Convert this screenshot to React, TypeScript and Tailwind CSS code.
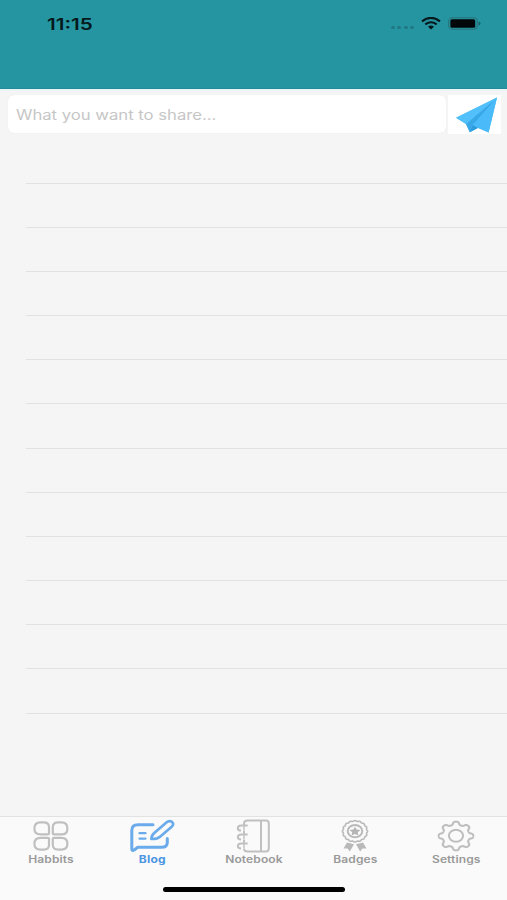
import type { ReactNode } from "react";

const rows = Array.from({ length: 13 }, (_, i) => i);

// Closed wavy outline around a centre, used by the gear and the rosette
const wavyPath = (
  cx: number,
  cy: number,
  rx: number,
  ry: number,
  teeth: number,
  depth: number,
  sharpness: number
) => {
  const points: string[] = [];
  for (let i = 0; i < 240; i++) {
    const a = (i / 240) * Math.PI * 2;
    const wave = Math.tanh(sharpness * Math.cos(teeth * a)) / Math.tanh(sharpness);
    const k = 1 + depth * wave;
    points.push(`${(cx + rx * k * Math.cos(a)).toFixed(2)} ${(cy + ry * k * Math.sin(a)).toFixed(2)}`);
  }
  return `M${points.join("L")}Z`;
};

const HabitsIcon = () => (
  <svg width="36" height="30" viewBox="0 0 36 30" fill="none" stroke="#c0c0c0" strokeWidth="2.2">
    <path d="M7.5 1.4h3.2Q16 1.4 16 6v6Q16 13.4 14.5 13.4H7.5Q1.4 13.4 1.4 7.4T7.5 1.4Z" />
    <path d="M28.5 1.4h-3.2Q19.8 1.4 19.8 6v6Q19.8 13.4 21.3 13.4h7.2Q34.4 13.4 34.4 7.4T28.5 1.4Z" />
    <path d="M7.5 28.6h3.2Q16 28.6 16 24v-6Q16 16.8 14.5 16.8H7.5Q1.4 16.8 1.4 22.7T7.5 28.6Z" />
    <path d="M28.5 28.6h-3.2Q19.8 28.6 19.8 24v-6Q19.8 16.8 21.3 16.8h7.2Q34.4 16.8 34.4 22.7T28.5 28.6Z" />
  </svg>
);

const BlogIcon = () => (
  <svg
    width="46"
    height="34"
    viewBox="0 0 46 34"
    fill="none"
    stroke="#6aabeb"
    strokeWidth="3"
    strokeLinecap="round"
    strokeLinejoin="round"
  >
    <path d="M24 5.8H9Q2.8 5.8 2.8 11.5V30Q2.8 32.3 5.2 31L8.8 28.3H32.5Q38.3 28.3 38.3 23.5V19.5" />
    <path d="M10.5 14.2h6M10.5 19.6h6" strokeWidth="2.3" />
    <path
      d="M22.4 20Q22.4 16.5 25.5 13.8L37.4 3.4Q40.2 1.2 42.7 2.7Q45.4 4.8 43 7.4L31.3 17.5Q28.2 20.2 22.4 20Z"
      strokeWidth="2.7"
    />
  </svg>
);

const NotebookIcon = () => (
  <svg width="36" height="34" viewBox="0 0 36 34" fill="none" stroke="#c0c0c0" strokeWidth="2">
    <path d="M8 6.3V4.5Q8 1.4 11.5 1.4H30Q32.8 1.4 32.8 4.5V29.3Q32.8 32.5 30 32.5H11.5Q8 32.5 8 29.8M8 11.8v3.2M8 20.8v3" />
    <path d="M25 1.4v31.1" />
    <path d="M11.7 6.6H5.3Q1.8 6.9 1.8 9.2T5 11.6M11.7 15.5H5.3Q1.8 15.8 1.8 18.1T5 20.5M11.7 24.4H5.3Q1.8 24.7 1.8 27T5 29.4" />
    <path d="M8 6.6v5M8 15.5v5M8 24.4v5" strokeWidth="1.4" />
  </svg>
);

const BadgeIcon = () => (
  <svg width="28" height="34" viewBox="0 0 28 34" fill="none" stroke="#bababa" strokeWidth="1.6">
    <path d={wavyPath(14, 12.3, 12.2, 10.4, 16, 0.035, 0.8)} />
    <ellipse cx="14" cy="12.1" rx="7.3" ry="6.1" strokeWidth="2" />
    <path
      d="m14 7.8 1.7 2.8 3.8.5-2.7 2.1.6 3.2-3.4-1.5-3.4 1.5.6-3.2-2.7-2.1 3.8-.5Z"
      fill="#b5b5b5"
      stroke="none"
    />
    <path
      d="M6 23.5 2.5 29.6l4.1-.2 2.2 3 4.2-7.1ZM22 23.5l3.5 6.1-4.1-.2-2.2 3-4.2-7.1Z"
      fill="#b9b9b9"
      stroke="none"
    />
  </svg>
);

const SettingsIcon = () => (
  <svg width="38" height="32" viewBox="0 0 38 32" fill="none" stroke="#bfbfbf" strokeWidth="2.1">
    <path d={wavyPath(19, 16, 15.4, 12.8, 8, 0.12, 1.7)} strokeLinejoin="round" />
    <ellipse cx="19" cy="15.7" rx="7.1" ry="6" />
  </svg>
);

interface TabProps {
  label: string;
  icon: ReactNode;
  active?: boolean;
}

const Tab = ({ label, icon, active = false }: TabProps) => (
  <div className="flex flex-1 flex-col items-center">
    <div className="flex h-[35px] items-center justify-center">{icon}</div>
    <span
      className={`scale-x-[1.2] whitespace-nowrap text-[10px] leading-[12px] ${
        active ? "font-bold tracking-[0.2px] text-[#4a96e2]" : "font-semibold tracking-[0.1px] text-[#999999]"
      }`}
    >
      {label}
    </span>
  </div>
);

const StatusBar = () => (
  <header className="flex h-[89px] items-start justify-between border-b border-[#218c97] bg-[#2596a1] pl-[47px] pr-[26px] pt-[14px]">
    <span className="origin-left scale-x-[1.29] text-[16px] font-semibold leading-[20px] text-[#06191c]">11:15</span>
    <div className="flex h-[19px] items-center">
      <div className="mr-[7px] mt-[7px] flex gap-[2.5px]">
        {[0, 1, 2, 3].map((dot) => (
          <span key={dot} className="h-[3px] w-[4px] rounded-full bg-[#207983]" />
        ))}
      </div>
      <svg width="20" height="13" viewBox="0 0 20 13" fill="none" stroke="#06191c" className="mr-[7px]">
        <path d="M1 4.3Q10-2.6 19 4.3" strokeWidth="2.2" />
        <path d="M4.3 7.4Q10 3 15.7 7.4" strokeWidth="2" />
        <path d="M7 9.8Q10 7.4 13 9.8L10 12.4Z" fill="#06191c" stroke="none" />
      </svg>
      <svg width="33" height="13" viewBox="0 0 33 13">
        <rect x="0.7" y="0.8" width="28.5" height="11.4" rx="3.4" fill="none" stroke="#2a7279" strokeWidth="1.1" />
        <rect x="2.4" y="2.2" width="24.8" height="8.6" rx="1.6" fill="#010708" />
        <path d="M30.5 4.5q2 .5 2 2t-2 2Z" fill="#176169" />
      </svg>
    </div>
  </header>
);

const Composer = () => (
  <div className="flex h-[45px] items-start border-t-2 border-[#ebf5f7] pl-[8px] pr-[6px] pt-[4px]">
    <div className="flex h-[38px] w-[438px] items-center rounded-[6px] bg-white pl-[8px] pt-[2px] shadow-[0_0_1px_#dedede]">
      <span className="origin-left scale-x-[1.19] whitespace-nowrap text-[14px] leading-[20px] text-[#c6c6c6]">
        What you want to share...
      </span>
    </div>
    <div className="ml-[2px] flex h-[39px] w-[53px] items-start bg-white pl-[7px] pt-[2px]">
      <svg width="43" height="37" viewBox="0 0 43 37">
        <path d="M42 .5 1 20.8l10 6.3 3.8 8.2 8-4.4 10.8 4.5Z" fill="#4dbdf9" />
        <path d="M42 .5 11 27.1l3.8 8.2 3.1-7.4Z" fill="#39a8e9" />
        <path d="M42 .5 17.9 27.9l15.7 7.5Z" fill="#4abbf8" />
        <path d="m17.9 27.9-3.1 7.4 8-4.4Z" fill="#2e9ade" />
        <path d="M1 20.8 42 .5 11 27.1Z" fill="#52c0fb" />
      </svg>
    </div>
  </div>
);

const App = () => {
  return (
    <main className="flex h-[900px] w-[507px] flex-col overflow-hidden bg-[#f5f5f5] font-['Inter','Liberation_Sans',sans-serif]">
      <StatusBar />
      <Composer />

      {/* Empty feed */}
      <section className="flex-1 pl-[26px] pt-[5.4px]">
        {rows.map((row) => (
          <div key={row} className="h-[44.18px] border-b border-[#e2e2e2]" />
        ))}
      </section>

      {/* Tab bar */}
      <footer className="flex h-[84px] flex-col border-t border-[#e2e2e2] bg-[#fafafa]">
        <nav className="flex h-[70px] pt-px">
          <Tab label="Habbits" icon={<HabitsIcon />} />
          <Tab label="Blog" icon={<BlogIcon />} active />
          <Tab label="Notebook" icon={<NotebookIcon />} />
          <Tab label="Badges" icon={<BadgeIcon />} />
          <Tab label="Settings" icon={<SettingsIcon />} />
        </nav>
        <div className="ml-[163px] h-[5px] w-[182px] rounded-full bg-black" />
      </footer>
    </main>
  );
};

export default App;
